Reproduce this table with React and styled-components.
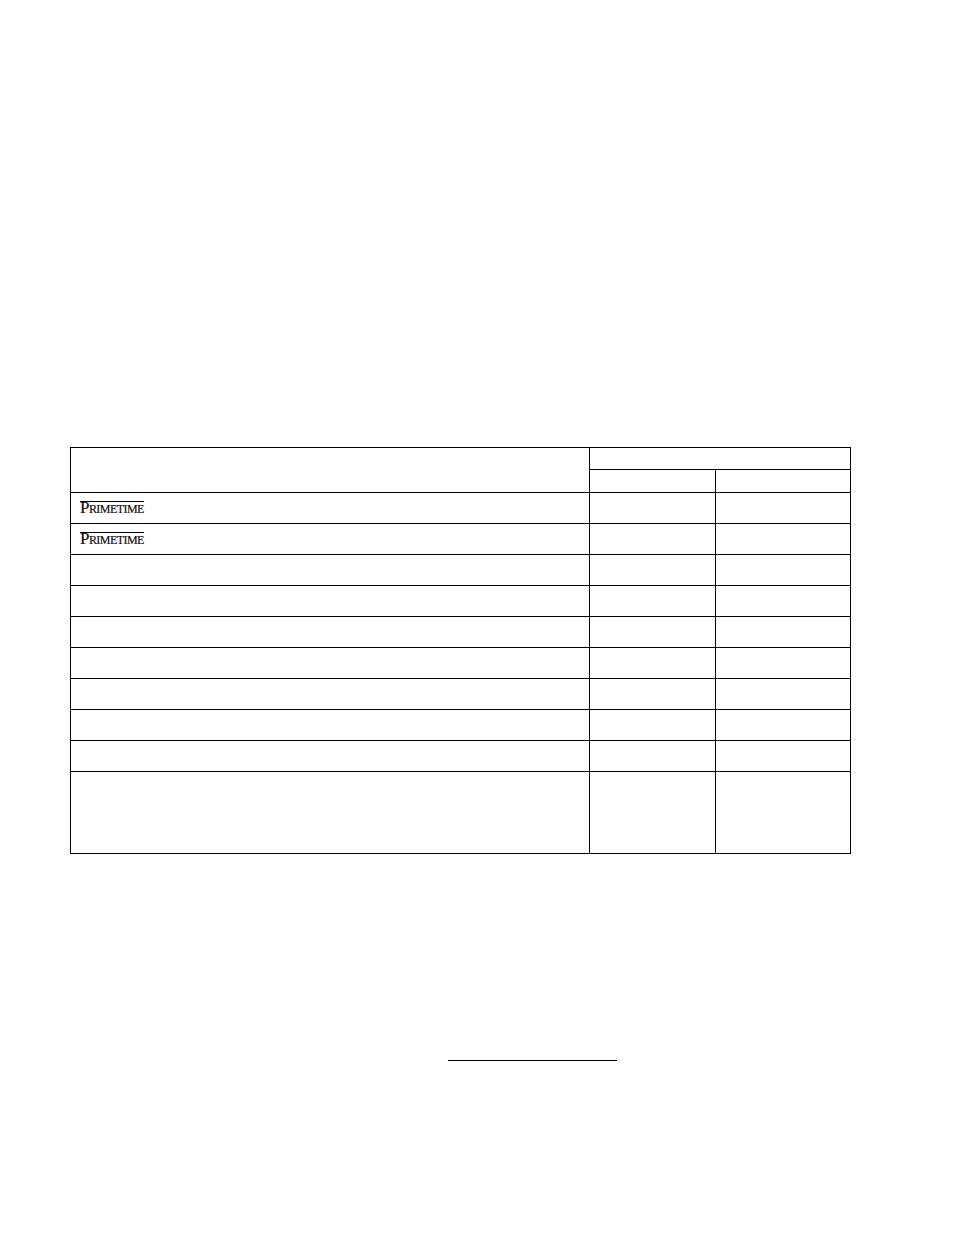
import React from 'react';
import styled, { createGlobalStyle } from 'styled-components';

const GlobalStyle = createGlobalStyle`
  html, body {
    margin: 0;
    padding: 0;
    background: #fff;
  }
  body {
    font-family: "Liberation Serif", "Times New Roman", serif;
    color: #000;
  }
`;

const Page = styled.div`
  width: 954px;
  min-height: 1235px;
  padding: 447px 0 0 70px;
  box-sizing: border-box;
`;

const Grid = styled.table`
  border-collapse: collapse;
  table-layout: fixed;
  width: 780px;
  border: 1px solid #000;
`;

const Cell = styled.td`
  border: 1px solid #000;
  padding: 0 0 0 9px;
  height: ${(p) => p.$h}px;
  box-sizing: border-box;
  vertical-align: middle;
  font-size: 13px;
  line-height: 1;
`;

const Logo = styled.span`
  display: inline-block;
  font-family: "Liberation Serif", "Times New Roman", serif;
  font-size: 17px;
  line-height: 12px;
  font-variant: small-caps;
  letter-spacing: -0.55px;
  border-top: 1px solid #000;
  color: #111;
  -webkit-text-stroke: 0.2px #111;
`;

const Rule = styled.div`
  margin: 206px 0 0 378px;
  width: 169px;
  border-top: 1px solid #000;
`;

const rows = [
  { logo: true },
  { logo: true },
  {},
  {},
  {},
  {},
  {},
  {},
  {},
  { h: 82 },
];

export default function App() {
  return (
    <>
      <GlobalStyle />
      <Page>
        <Grid>
          <colgroup>
            <col style={{ width: 519 }} />
            <col style={{ width: 126 }} />
            <col style={{ width: 135 }} />
          </colgroup>
          <tbody>
            <tr>
              <Cell rowSpan={2} $h={45} />
              <Cell colSpan={2} $h={22} />
            </tr>
            <tr>
              <Cell $h={23} />
              <Cell $h={23} />
            </tr>
            {rows.map((r, i) => (
              <tr key={i}>
                <Cell $h={r.h || 31}>{r.logo && <Logo>Primetime</Logo>}</Cell>
                <Cell $h={r.h || 31} />
                <Cell $h={r.h || 31} />
              </tr>
            ))}
          </tbody>
        </Grid>
        <Rule />
      </Page>
    </>
  );
}
